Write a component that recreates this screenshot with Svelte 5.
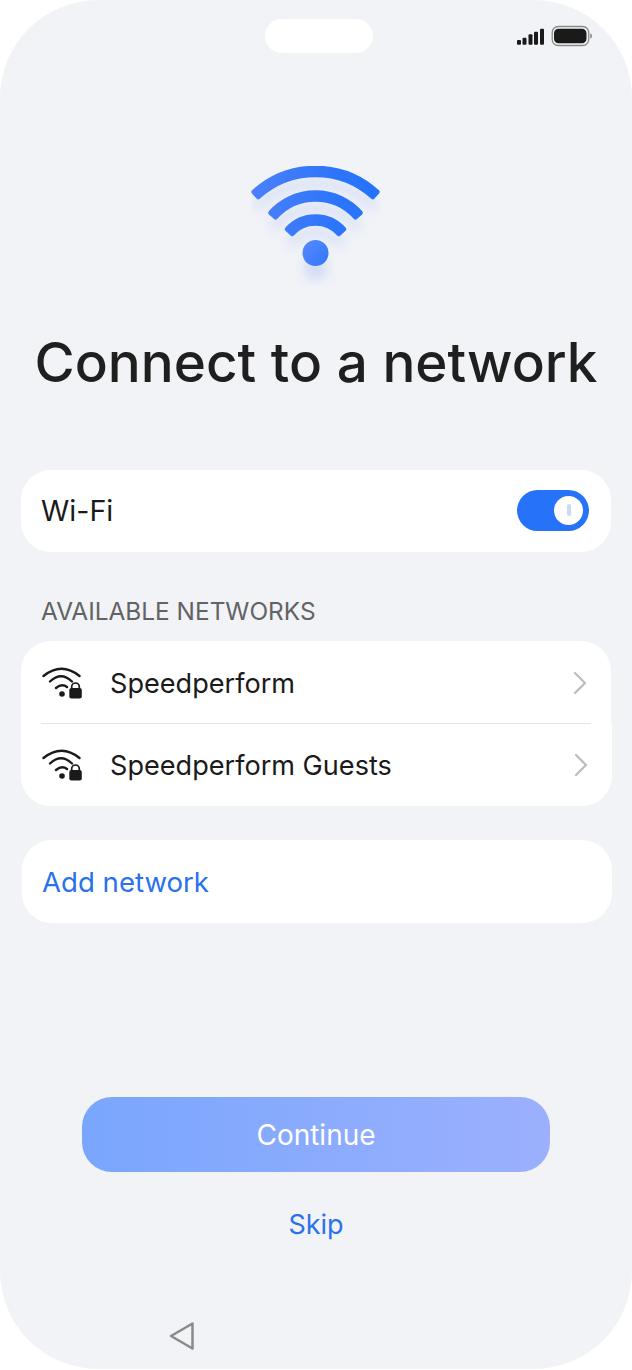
<script>
  const networks = ['Speedperform', 'Speedperform Guests'];
</script>

<div class="screen">
  <div class="status">
    <div class="pill"></div>
    <div class="indicators">
      <svg width="30" height="18" viewBox="0 0 30 18" class="signal">
        <rect x="1" y="13" width="4" height="4.700" rx="1" />
        <rect x="6.500" y="10.700" width="4" height="7" rx="1" />
        <rect x="12.500" y="7.300" width="4" height="10.400" rx="1" />
        <rect x="18" y="4.700" width="4" height="13" rx="1" />
        <rect x="24" y="1.700" width="4" height="16" rx="1" />
      </svg>
      <svg width="42" height="22" viewBox="0 0 42 22" class="battery">
        <rect x="1.200" y="1.500" width="36.500" height="19" rx="6" fill="none" stroke="#8a8a8a" stroke-width="1.300" />
        <rect x="3" y="3.700" width="32.500" height="14.600" rx="4.500" fill="#1a1a1a" />
        <path d="M39.200 8.200 Q41 8.800 41 11 Q41 13.200 39.200 13.800z" fill="#8a8a8a" />
      </svg>
    </div>
  </div>

  <div class="hero">
    <svg width="130" height="120" viewBox="0 0 130 120" class="wifi">
      <defs>
        <linearGradient id="g" gradientUnits="userSpaceOnUse" x1="0" y1="0" x2="130" y2="0">
          <stop offset="0" stop-color="#4c80fb" />
          <stop offset="0.6" stop-color="#2e76fb" />
          <stop offset="1" stop-color="#2472fb" />
        </linearGradient>
        <linearGradient id="d" x1="0" y1="0" x2="1" y2="1">
          <stop offset="0" stop-color="#5a8afc" />
          <stop offset="1" stop-color="#2f76fb" />
        </linearGradient>
        <filter id="b" x="-30%" y="-30%" width="160%" height="170%">
          <feGaussianBlur stdDeviation="6" />
        </filter>
      </defs>
      <g class="shadow" filter="url(#b)" transform="translate(0 12)">
        <path d="M2.600 25.900A92 92 0 0 1 126.400 25.900L121.800 31.100A85 85 0 0 0 7.200 31.100Z" />
        <path d="M19.400 46.700A60.500 60.500 0 0 1 109.600 46.700L104.400 51.300A53.500 53.500 0 0 0 24.600 51.300Z" />
        <path d="M35.900 63.200A38.500 38.500 0 0 1 93.100 63.200L87.900 67.900A31.500 31.500 0 0 0 41.100 67.900Z" />
        <circle cx="64.500" cy="90" r="12" />
      </g>
      <g class="arcs">
        <path d="M2.600 25.900A92 92 0 0 1 126.400 25.900L121.800 31.100A85 85 0 0 0 7.200 31.100Z" />
        <path d="M19.400 46.700A60.500 60.500 0 0 1 109.600 46.700L104.400 51.300A53.500 53.500 0 0 0 24.600 51.300Z" />
        <path d="M35.900 63.200A38.500 38.500 0 0 1 93.100 63.200L87.900 67.900A31.500 31.500 0 0 0 41.100 67.900Z" />
      </g>
      <circle cx="64.500" cy="87" r="13" fill="url(#d)" />
    </svg>
    <h1>Connect to a network</h1>
  </div>

  <section class="card wifi-card">
    <span>Wi-Fi</span>
    <div class="toggle"><div class="knob"><i></i></div></div>
  </section>

  <h2>AVAILABLE NETWORKS</h2>

  <section class="card list">
    {#each networks as name, i}
      <div class="row" class:wide={i === 1}>
        <svg width="42" height="36" viewBox="0 0 42 36" class="net">
          <path d="M2.500 11Q20.500 -3.500 38.500 11M9 16.500Q20 6 31 16.500M15 23Q21 18 26 22" fill="none" stroke="#1a1a1a" stroke-width="2.400" stroke-linecap="round" />
          <circle cx="21" cy="29" r="2.800" fill="#1a1a1a" />
          <rect x="28.300" y="23" width="12.500" height="10.500" rx="2" fill="#1a1a1a" />
          <path d="M30.700 24V21.800a3.800 3.800 0 0 1 7.600 0V24" fill="none" stroke="#1a1a1a" stroke-width="1.700" />
        </svg>
        <span class="name">{name}</span>
        <svg width="14" height="24" viewBox="0 0 14 24" class="chev">
          <path d="M2 2L12 12L2 22" fill="none" stroke="#bdbdbd" stroke-width="2.300" stroke-linecap="round" stroke-linejoin="round" />
        </svg>
      </div>
    {/each}
  </section>

  <section class="card add">Add network</section>

  <div class="actions">
    <button class="continue">Continue</button>
    <button class="skip">Skip</button>
  </div>

  <div class="nav">
    <svg width="26" height="30" viewBox="0 0 26 30">
      <path d="M2 15L23.500 2.500V27.500Z" fill="none" stroke="#8a8a8a" stroke-width="2.500" stroke-linejoin="round" />
    </svg>
  </div>
</div>

<style>
  :global(body) {
    margin: 0;
    background: #fff;
  }
  .screen {
    width: 632px;
    height: 1369px;
    box-sizing: border-box;
    background: #f1f3f7;
    border-radius: 98px;
    font-family: "Inter", sans-serif;
    color: #1a1a1a;
    display: flex;
    flex-direction: column;
    overflow: hidden;
  }
  .status {
    height: 146px;
    flex: none;
    display: flex;
    justify-content: center;
    position: relative;
  }
  .pill {
    width: 108px;
    height: 34px;
    margin-top: 19px;
    margin-left: 6px;
    border-radius: 17px;
    background: #fff;
  }
  .indicators {
    position: absolute;
    top: 25px;
    left: 516px;
    display: flex;
    align-items: center;
    gap: 5px;
  }
  .signal rect {
    fill: #1a1a1a;
  }
  .hero {
    display: flex;
    flex-direction: column;
    align-items: center;
    height: 324px;
    flex: none;
  }
  .wifi {
    margin-top: 20px;
    display: block;
    flex: none;
  }
  .shadow path {
    fill: #b9c9f2;
    stroke: #b9c9f2;
    stroke-width: 3.500;
    stroke-linejoin: round;
    opacity: 0.42;
  }
  .shadow circle {
    fill: #b9c9f2;
    opacity: 0.55;
  }
  .arcs path {
    fill: url(#g);
    stroke: url(#g);
    stroke-width: 4.500;
    stroke-linejoin: round;
  }
  h1 {
    margin: 41px 0 0;
    font-size: 54.800px;
    line-height: 70px;
    font-weight: 450;
    white-space: nowrap;
    color: #1f1f1f;
  }
  .card {
    background: #fff;
    border-radius: 30px;
    box-sizing: border-box;
    margin-left: 21px;
    width: 590px;
    flex: none;
  }
  .wifi-card {
    height: 82px;
    padding: 0 22px 1px 20px;
    display: flex;
    align-items: center;
    justify-content: space-between;
    font-size: 28.700px;
  }
  .toggle {
    width: 72px;
    height: 41px;
    margin-top: -1px;
    border-radius: 21px;
    background: #2672f8;
    position: relative;
  }
  .knob {
    position: absolute;
    top: 6px;
    right: 6px;
    width: 29px;
    height: 29px;
    border-radius: 50%;
    background: #fff;
    display: flex;
    align-items: center;
    justify-content: center;
  }
  .knob i {
    display: block;
    width: 4px;
    height: 12px;
    border-radius: 2px;
    background: #c9daf8;
  }
  h2 {
    margin: 44px 0 15px 41px;
    font-size: 24.400px;
    line-height: 30px;
    font-weight: 400;
    color: #636363;
    white-space: nowrap;
    flex: none;
  }
  .list {
    height: 165px;
    position: relative;
  }
  .row {
    height: 82px;
    display: flex;
    align-items: center;
    padding: 2px 20px 0 20px;
    box-sizing: border-box;
    position: relative;
  }
  .row.wide {
    height: 83px;
    padding-top: 1px;
    background: #fff;
    margin-right: -1px;
    border-radius: 0 0 30px 30px;
  }
  .row.wide::before {
    content: "";
    position: absolute;
    top: 0;
    left: 20px;
    right: 21px;
    height: 1px;
    background: #e4e4e6;
  }
  .net {
    flex: none;
  }
  .name {
    margin-left: 27px;
    font-size: 27.100px;
    flex: 1;
    color: #1a1a1a;
  }
  .chev {
    flex: none;
    margin-right: 4px;
  }
  .add {
    margin-top: 34px;
    margin-left: 22px;
    height: 83px;
    padding-left: 20px;
    display: flex;
    align-items: center;
    font-size: 27.600px;
    color: #2a72ec;
  }
  .actions {
    margin-top: 174px;
    display: flex;
    flex-direction: column;
    align-items: center;
    flex: none;
  }
  button {
    border: 0;
    font: inherit;
    padding: 0;
  }
  .continue {
    width: 468px;
    height: 75px;
    border-radius: 30px;
    background: linear-gradient(90deg, #79a6fd, #9cb0fd);
    color: #fff;
    font-size: 28px;
  }
  .skip {
    margin-top: 33px;
    background: none;
    color: #2a72ec;
    font-size: 27px;
    line-height: 40px;
  }
  .nav {
    margin-top: 76px;
    margin-left: 169px;
    flex: none;
    height: 30px;
  }
  .nav svg {
    display: block;
  }
</style>
